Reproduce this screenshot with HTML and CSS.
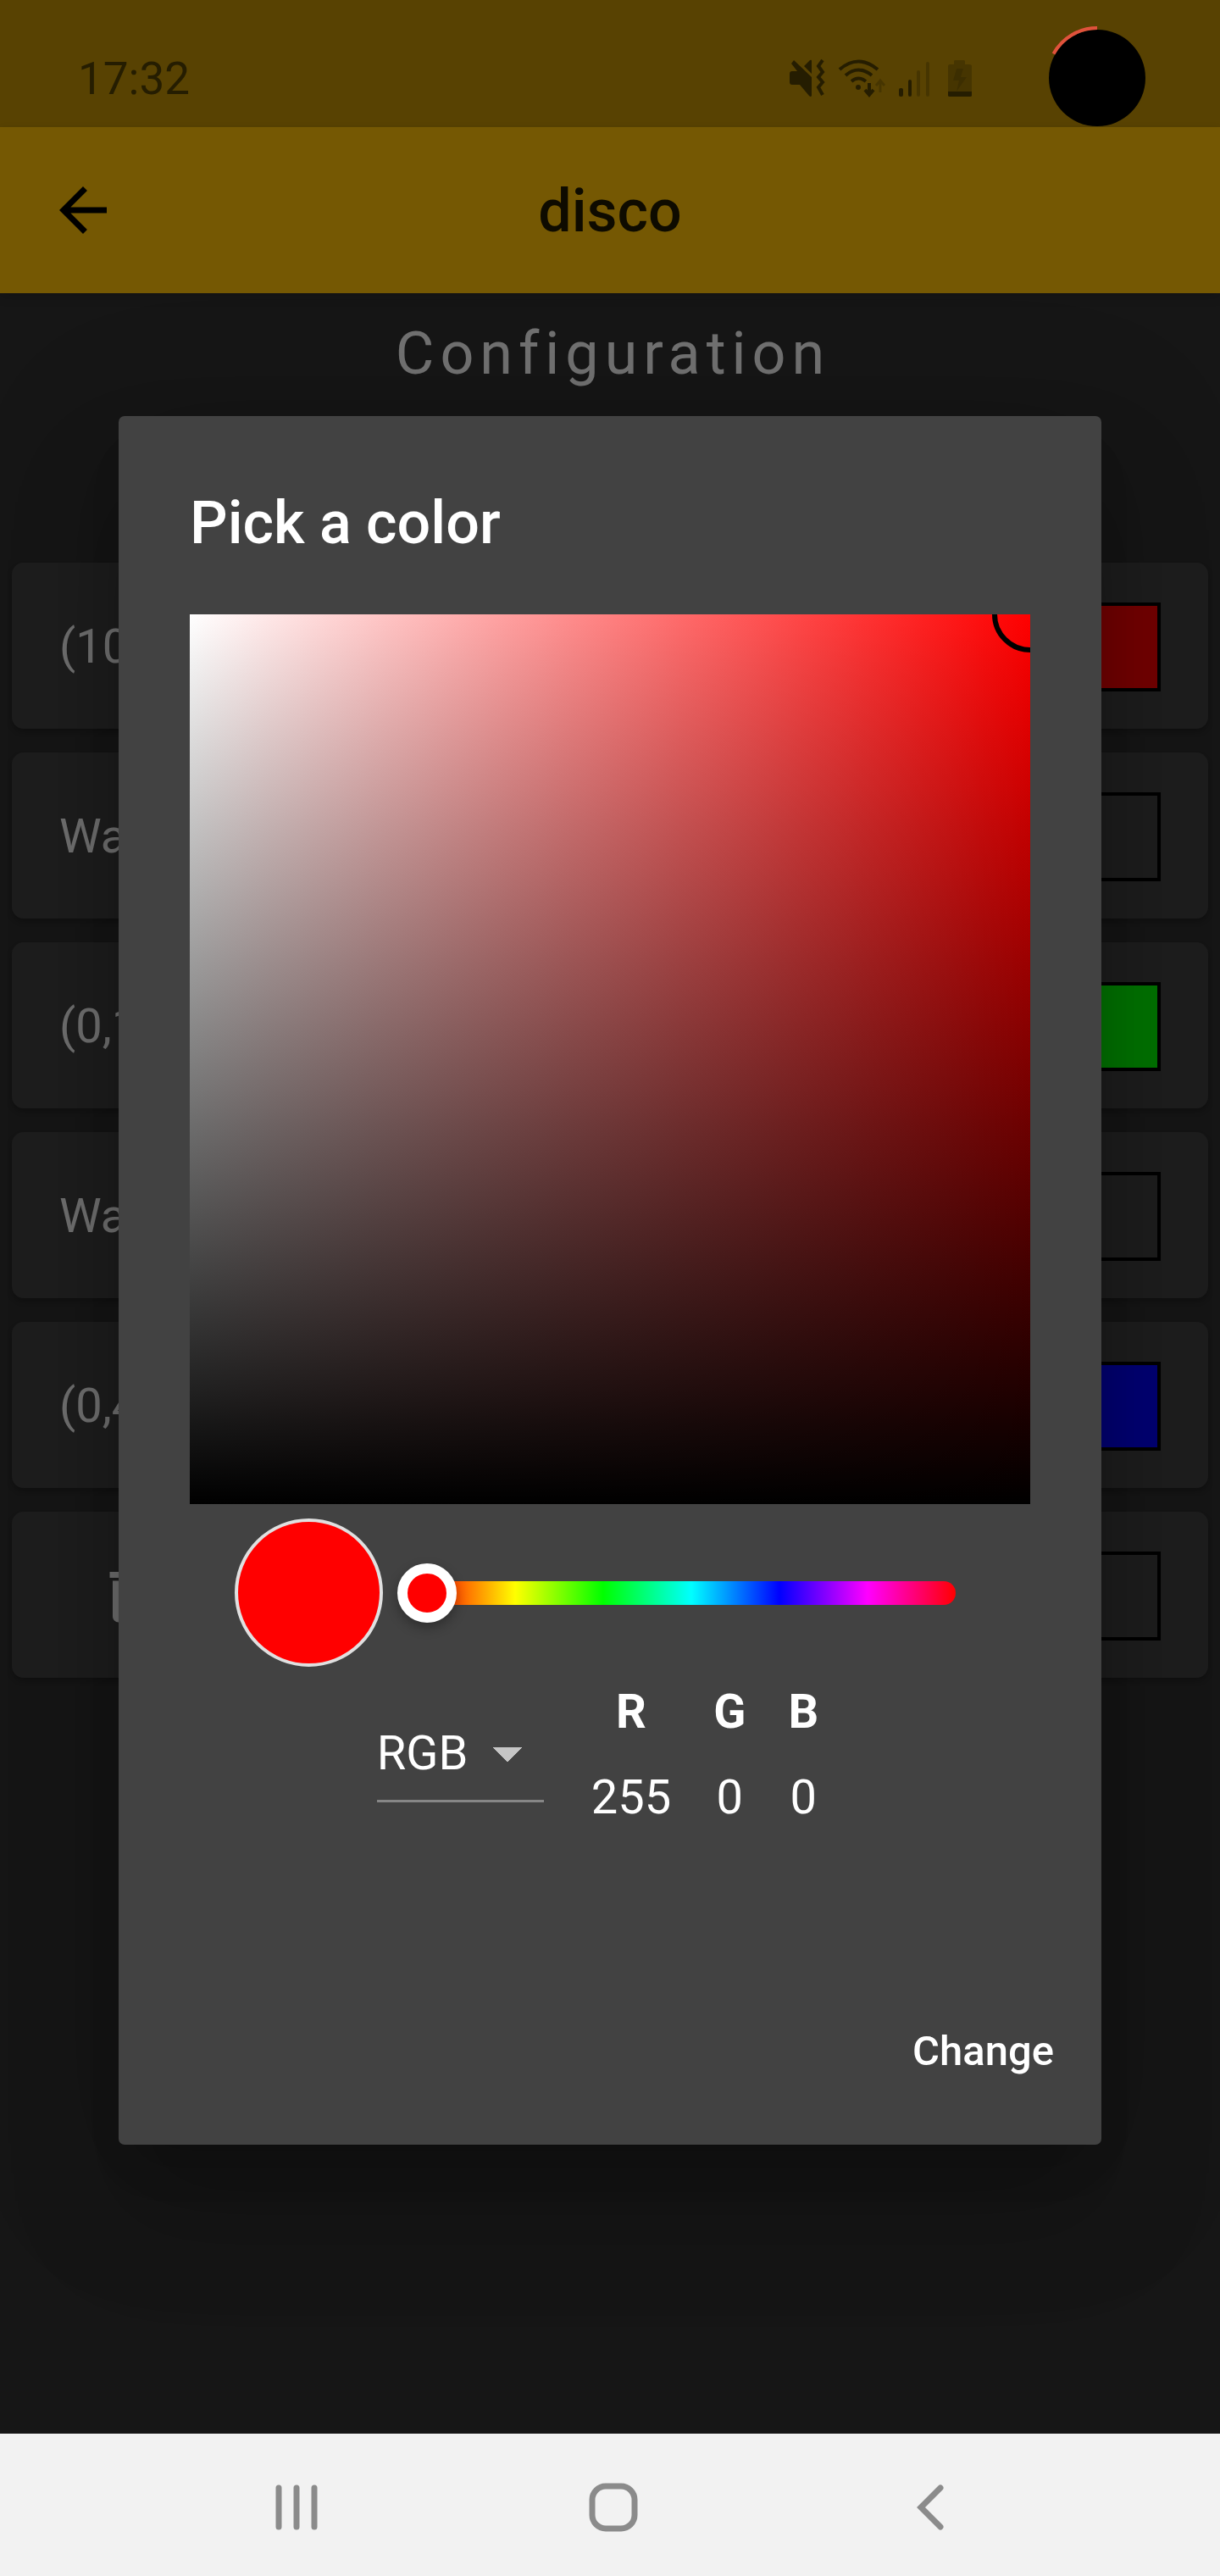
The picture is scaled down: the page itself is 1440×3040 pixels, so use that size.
FILE: index.html
```html
<!DOCTYPE html>
<html lang="en">
<head>
<meta charset="utf-8">
<meta name="viewport" content="width=device-width, initial-scale=1">
<title>disco</title>
<link rel="stylesheet" href="styles.css">
</head>
<body>
<div class="screen">
  <div class="app">
    <header class="status">
      <time class="clock">17:32</time>
      <svg class="status-icons" viewBox="0 0 220 48" aria-hidden="true">
        <g fill="currentColor">
          <path d="M0 18q0-3 3-3h6L2 6l3-4 21 20v22q-1 2-3 0L12 31H3q-3 0-3-3zM17 9l7-7q2-1 2 1v15z"/>
          <circle cx="81" cy="34" r="3"/>
          <rect x="129" y="35" width="5" height="10" rx="2"/>
          <rect x="140" y="25" width="4" height="20" rx="2"/>
          <rect x="150" y="14" width="4" height="31" rx="2" opacity=".35"/>
          <rect x="161" y="4" width="4" height="41" rx="2" opacity=".35"/>
          <path opacity=".35" d="M187 9q0-2 2-2h5V3q0-1 2-1h9q2 0 2 1v4h5q3 0 3 2v30h-28z"/>
          <path d="M187 39h28v5q0 1-2 1h-24q-2 0-2-1z"/>
          <path opacity=".3" d="M197 12h8l-3 10h7l-12 17 3-13h-7z"/>
        </g>
        <g fill="none" stroke="currentColor" stroke-width="4">
          <path d="M39 2l-5 7 5 7-5 6 5 6-5 6 5 9"/>
          <path d="M59 13q22-19 45 0M66 20q15-13 31 0M73 27q8-7 17 0"/>
          <path d="M94 29v14M89 37l5 6 5-6"/>
          <path opacity=".35" stroke-width="3" d="M107 40V26M102 32l5-6 5 6"/>
        </g>
      </svg>
    </header>
    <nav class="appbar">
      <button class="back" type="button" aria-label="Back">
        <svg viewBox="0 0 24 24"><path d="M20 11H7.83l5.59-5.59L12 4l-8 8 8 8 1.41-1.41L7.83 13H20z"/></svg>
      </button>
      <h1 class="title">disco</h1>
    </nav>
    <main class="content">
      <h2 class="heading">Configuration</h2>
      <ul class="steps">
        <li class="card"><span>(10</span><i class="swatch red"></i></li>
        <li class="card"><span>Wa</span><i class="swatch"></i></li>
        <li class="card"><span>(0,1</span><i class="swatch green"></i></li>
        <li class="card"><span>Wa</span><i class="swatch"></i></li>
        <li class="card"><span>(0,4</span><i class="swatch blue"></i></li>
        <li class="card">
          <button class="delete" type="button" aria-label="Delete">
            <svg viewBox="0 0 24 24"><path d="M6 19c0 1.100.9 2 2 2h8c1.100 0 2-.9 2-2V7H6zM19 4h-3.500l-1-1h-5l-1 1H5v2h14z"/></svg>
          </button>
          <i class="swatch"></i>
        </li>
      </ul>
    </main>
    <div class="scrim">
      <section class="dialog" role="dialog" aria-labelledby="dialog-title">
        <div class="dialog-body">
          <h2 class="dialog-title" id="dialog-title">Pick a color</h2>
          <div class="palette"><span class="cursor"></span></div>
          <div class="hue-row">
            <span class="preview"></span>
            <input class="hue" type="range" min="0" max="360" value="0" aria-label="Hue">
          </div>
          <div class="values">
            <select class="mode" aria-label="Color model"><option>RGB</option><option>HSV</option><option>HSL</option></select>
            <table class="channels">
              <thead><tr><th>R</th><th>G</th><th>B</th></tr></thead>
              <tbody><tr><td>255</td><td>0</td><td>0</td></tr></tbody>
            </table>
          </div>
        </div>
        <div class="actions"><button class="change" type="button">Change</button></div>
      </section>
    </div>
    <svg class="camera" viewBox="0 0 120 120" aria-hidden="true">
      <circle cx="60" cy="63" r="57"/>
      <path d="M8.500 34.500A59 59 0 0 1 60 4"/>
    </svg>
  </div>
  <nav class="system">
    <button type="button" aria-label="Recents"><svg viewBox="0 0 64 64"><path d="M11 9v46M32 9v46M53 9v46"/></svg></button>
    <button type="button" aria-label="Home"><svg viewBox="0 0 64 64"><rect x="7" y="7" width="50" height="50" rx="16"/></svg></button>
    <button type="button" aria-label="Back"><svg viewBox="0 0 64 64"><path d="M44 9L21 32l23 23"/></svg></button>
  </nav>
</div>
</body>
</html>
```
FILE: styles.css
```css
* { box-sizing: border-box; }

body {
  margin: 0;
  background: #303030;
  color: #fff;
  font-family: Roboto, sans-serif;
  font-size: 56px;
  line-height: 64px;
}

button, select { font: inherit; color: inherit; background: none; border: 0; padding: 0; }
h1, h2, ul { margin: 0; padding: 0; list-style: none; }
svg { display: block; }

.screen { display: flex; flex-direction: column; min-height: 100vh; }
.app { position: relative; flex: 1; display: flex; flex-direction: column; }

/* status bar */
.status {
  display: flex;
  align-items: center;
  height: 150px;
  padding: 36px 288px 0 92px;
  background: #c09105;
  color: #524003;
}
.clock { flex: 1; font-size: 53px; }
.status-icons { width: 220px; height: 48px; }
.camera { position: absolute; top: 29px; right: 85px; width: 120px; height: 120px; }
.camera path { fill: none; stroke: #e0523c; stroke-width: 4; }

/* app bar */
.appbar {
  display: grid;
  grid-template-columns: 196px 1fr 196px;
  align-items: center;
  height: 196px;
  background: #ffc107;
  color: #000;
  box-shadow: 0 4px 12px rgba(0, 0, 0, .15);
}
.back { display: grid; place-items: center; }
.back svg { width: 84px; height: 84px; }
.title, .dialog-title { font-size: 70px; line-height: 84px; font-weight: 500; }
.title { padding-top: 2px; text-align: center; color: #1f1801; }

/* configuration list */
.content { padding: 29px 14px; color: rgba(255, 255, 255, .96); }
.heading {
  padding-left: 7px;
  font-size: 70px;
  line-height: 84px;
  font-weight: 400;
  letter-spacing: 7px;
  text-align: center;
}
.steps { display: grid; gap: 28px; margin-top: 205px; }
.card {
  display: flex;
  align-items: center;
  justify-content: space-between;
  height: 196px;
  padding: 2px 56px 0;
  border-radius: 14px;
  background: #424242;
  box-shadow: 0 4px 6px rgba(0, 0, 0, .2);
}
.swatch { width: 105px; height: 105px; border: 4px solid #000; }
.swatch.red { background: #f00; }
.swatch.green { background: #0f0; }
.swatch.blue { background: #00f; }
.delete { display: grid; place-items: center; width: 168px; height: 168px; }
.delete svg { width: 84px; height: 84px; fill: currentColor; }

/* modal */
.scrim {
  position: absolute;
  inset: 0;
  padding: 491px 140px 0;
  background: rgba(0, 0, 0, .54);
}
.dialog {
  padding: 84px 56px 47px;
  border-radius: 7px;
  background: #424242;
  box-shadow:
    0 38px 52px -24px rgba(0, 0, 0, .2),
    0 84px 133px 10px rgba(0, 0, 0, .14),
    0 32px 161px 28px rgba(0, 0, 0, .12);
}
.dialog-body { padding: 0 28px; }
.palette {
  position: relative;
  height: 1050px;
  margin-top: 66px;
  overflow: hidden;
  background: linear-gradient(transparent, #000), linear-gradient(90deg, #fff, #f00);
}
.cursor {
  position: absolute;
  top: -45px;
  right: -45px;
  width: 90px;
  height: 90px;
  border: 6px solid #000;
  border-radius: 50%;
}
.hue-row { display: flex; align-items: center; gap: 52px; padding: 17px 88px 0 53px; }
.preview {
  width: 175px;
  height: 175px;
  border: 4px solid #e0e0e0;
  border-radius: 50%;
  background: #f00;
}
.hue {
  flex: 1;
  min-width: 0;
  height: 70px;
  margin: 0;
  appearance: none;
  background: none;
}
.hue::-webkit-slider-runnable-track {
  height: 28px;
  border-radius: 14px;
  background: linear-gradient(90deg, #f00, #ff0, #0f0, #0ff, #00f, #f0f, #f00);
}
.hue::-webkit-slider-thumb {
  appearance: none;
  width: 70px;
  height: 70px;
  margin: -21px 0 0 -35px;
  border: 12px solid #fff;
  border-radius: 50%;
  background: #f00;
  box-shadow: 0 6px 14px rgba(0, 0, 0, .3);
}
.values {
  display: flex;
  align-items: center;
  justify-content: center;
  gap: 31px;
  padding: 2px 4px 0 0;
}
.mode {
  appearance: none;
  width: 197px;
  height: 114px;
  border-bottom: 3px solid #868686;
  background:
    linear-gradient(to top right, transparent 50%, #c6c6c6 50%) 136px 49px / 18px 18px no-repeat,
    linear-gradient(to top left, transparent 50%, #c6c6c6 50%) 154px 49px / 18px 18px no-repeat;
}
.channels { border-collapse: collapse; text-align: center; }
.channels th, .channels td { height: 101px; padding: 0 25px; }
.channels th { font-weight: 700; }
.actions { display: flex; justify-content: flex-end; margin-top: 187px; }
.change { height: 126px; font-size: 49px; font-weight: 500; }

/* system navigation */
.system {
  display: flex;
  justify-content: center;
  align-items: center;
  gap: 310px;
  height: 168px;
  padding: 5px 0 0 7px;
  background: #f2f2f2;
}
.system svg {
  width: 64px;
  height: 64px;
  fill: none;
  stroke: #8b8b8b;
  stroke-width: 7;
  stroke-linecap: round;
}
```
